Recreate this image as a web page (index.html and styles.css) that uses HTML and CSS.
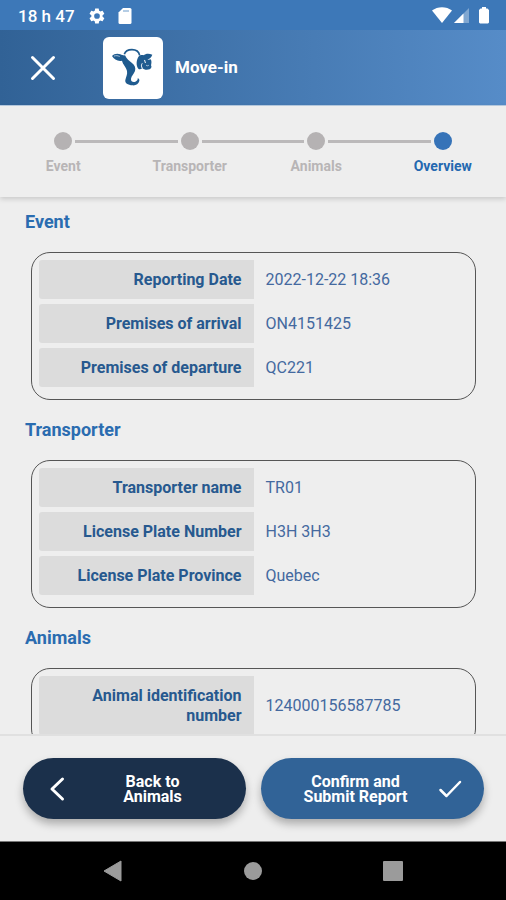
FILE: index.html
```html
<!DOCTYPE html>
<html lang="en">
<head>
<meta charset="utf-8">
<meta name="viewport" content="width=device-width, initial-scale=1">
<title>Move-in</title>
<link rel="stylesheet" href="styles.css">
</head>
<body>
<div class="status">
  <span class="time">18 h 47</span>
  <svg class="gear" width="18" height="18" viewBox="0 0 24 24" fill="currentColor"><path fill-rule="evenodd" d="M19.400 13a7.500 7.500 0 0 0 0-2l2.100-1.600c.2-.2.300-.4.100-.7l-2-3.400c-.1-.2-.4-.3-.6-.2l-2.500 1a7.300 7.300 0 0 0-1.700-1l-.4-2.600c0-.3-.2-.5-.5-.5h-4c-.2 0-.4.2-.5.5L9 5.100a7.300 7.300 0 0 0-1.700 1l-2.500-1c-.2-.1-.5 0-.6.200l-2 3.400c-.1.200 0 .5.100.7L4.500 11a7.500 7.500 0 0 0 0 2l-2.200 1.600c-.1.200-.2.500-.1.700l2 3.400c.1.200.4.300.6.200l2.500-1c.5.400 1.100.8 1.700 1l.4 2.600c.1.300.3.500.5.500h4c.3 0 .5-.2.500-.5l.4-2.600c.6-.2 1.200-.6 1.700-1l2.500 1c.2.100.5 0 .6-.2l2-3.400c.2-.2.100-.5-.1-.7zM12 15.800a3.800 3.800 0 1 1 0-7.600 3.800 3.800 0 0 1 0 7.600z"/></svg>
  <svg class="sd" width="14" height="16" viewBox="0 0 14 16" fill="currentColor"><path fill-rule="evenodd" d="M5 0H12a1.500 1.500 0 0 1 1.500 1.500v13A1.500 1.500 0 0 1 12 16H2a1.500 1.500 0 0 1-1.500-1.500V4.500z"/><path d="M5 3h6" stroke="#9dbcdc" stroke-width="1.500"/></svg>
  <span class="signals">
    <svg width="20" height="17" viewBox="0 0 20 17" fill="currentColor"><path d="M0 3.500C5.500-1 14.500-1 20 3.500L10 16z"/></svg>
    <svg width="16" height="17" viewBox="0 0 16 17" fill="currentColor"><path opacity=".35" d="M15 1v15H0z"/><path d="M9.500 6.500V16H0z"/></svg>
    <svg class="battery" width="12" height="17" viewBox="0 0 12 17" fill="currentColor"><path d="M4 0h4v1.500h1.500L11 3v12.500l-1 1H2l-1-1V3l1.500-1.500H4z"/></svg>
  </span>
</div>

<header class="bar">
  <button class="close" type="button" aria-label="Close">
    <svg width="26" height="26" viewBox="0 0 26 26" fill="none" stroke="currentColor" stroke-width="3" stroke-linecap="round"><path d="M2.500 2.500l21 21M23.500 2.500l-21 21"/></svg>
  </button>
  <svg class="logo" width="60" height="62" viewBox="0 0 180 186">
    <rect width="180" height="186" rx="18" fill="#fff"/>
    <path d="M64 52C67 42 76 38 87 38s20 4 23 17" fill="none" stroke="#1f5b8f" stroke-width="5"/>
    <g fill="#1f5b8f">
      <path d="M27 57c6-7 17-9 25-5 5 2 10 4 14 3 5 12 13 16 20 22 9 7 13 15 10 25-3 9-11 15-12 23-1 8 6 12 13 9 5-2 8-6 7-10 4 1 6 4 5 8-2 9-11 14-20 13-15-1-24-7-22-16 2-10 7-16 5-27-2-12-12-18-15-31-11 3-24-3-30-14z"/>
      <path d="M108 57c4-4 11-4 15-2 4-5 14-6 25-2-3 9-10 14-15 14 4 2 7 1 10 0 4 6 2 13 1 18 3 4 1 10-4 12-9 3-18 1-22-4-4 4-9 5-12 2-7-9-7-26 2-38z"/>
    </g>
    <g fill="none" stroke="#fff" stroke-linecap="round">
      <path d="M34 57c6-2 10-1 15 1" stroke="#a9c2d9" stroke-width="3"/>
      <path d="M117 80c-3 5-2 8 0 12M125 70l2 7" stroke-width="3"/>
      <path d="M130 85c3 2 5 2 7 0" stroke="#a9c2d9" stroke-width="3"/>
    </g>
  </svg>
  <h1>Move-in</h1>
</header>

<ol class="steps">
  <li><span class="track"><i class="dot"></i></span>Event</li>
  <li><span class="track"><i class="dot"></i></span>Transporter</li>
  <li><span class="track"><i class="dot"></i></span>Animals</li>
  <li class="current" aria-current="step"><span class="track"><i class="dot"></i></span>Overview</li>
</ol>

<main>
  <section>
    <h2>Event</h2>
    <div class="card">
      <table>
        <tr><th scope="row">Reporting Date</th><td>2022-12-22 18:36</td></tr>
        <tr><th scope="row">Premises of arrival</th><td>ON4151425</td></tr>
        <tr><th scope="row">Premises of departure</th><td>QC221</td></tr>
      </table>
    </div>
  </section>
  <section>
    <h2>Transporter</h2>
    <div class="card">
      <table>
        <tr><th scope="row">Transporter name</th><td>TR01</td></tr>
        <tr><th scope="row">License Plate Number</th><td>H3H 3H3</td></tr>
        <tr><th scope="row">License Plate Province</th><td>Quebec</td></tr>
      </table>
    </div>
  </section>
  <section>
    <h2>Animals</h2>
    <div class="card">
      <table>
        <tr><th scope="row">Animal identification number</th><td>124000156587785</td></tr>
      </table>
    </div>
  </section>
</main>

<footer class="actions">
  <button class="action back" type="button">
    <svg width="16" height="26" viewBox="0 0 16 26" fill="none" stroke="currentColor" stroke-width="3" stroke-linecap="round" stroke-linejoin="round"><path d="M13.500 3L3 13l10.500 10"/></svg>
    <span>Back to<br>Animals</span>
  </button>
  <button class="action confirm" type="button">
    <span>Confirm and<br>Submit Report</span>
    <svg width="24" height="20" viewBox="0 0 24 20" fill="none" stroke="currentColor" stroke-width="2.500" stroke-linecap="round" stroke-linejoin="round"><path d="M2.500 11l6 6L22 3"/></svg>
  </button>
</footer>

<nav class="system">
  <button type="button" aria-label="Back"><svg width="20" height="22" viewBox="0 0 20 22" fill="currentColor"><path d="M18 1v20L1 11z" stroke="currentColor" stroke-linejoin="round"/></svg></button>
  <button type="button" aria-label="Home"><svg width="20" height="20" viewBox="0 0 20 20" fill="currentColor"><circle cx="10" cy="10" r="9"/></svg></button>
  <button type="button" aria-label="Recent apps"><svg width="20" height="20" viewBox="0 0 20 20" fill="currentColor"><rect width="20" height="20" rx="1"/></svg></button>
</nav>
</body>
</html>
```
FILE: styles.css
```css
* {
  box-sizing: border-box;
}

body {
  margin: 0;
  height: 100vh;
  display: flex;
  flex-direction: column;
  background: #eee;
  font-family: Roboto, "Liberation Sans", sans-serif;
  font-size: 16px;
  line-height: 20px;
}

button {
  border: 0;
  padding: 0;
  background: none;
  color: inherit;
  font: inherit;
}

svg {
  display: block;
  flex: none;
}

.status {
  flex: none;
  height: 30px;
  padding: 1px 16px 0 18px;
  display: flex;
  align-items: center;
  background: #3d78b8;
  color: #fff;
}

.time {
  font-size: 17px;
  font-weight: 500;
}

.gear {
  margin-left: 13px;
}

.sd {
  margin-left: 12px;
}

.signals {
  margin-left: auto;
  display: flex;
  gap: 2px;
}

.battery {
  margin-left: 6px;
}

.bar {
  flex: none;
  height: 76px;
  padding: 0 30px;
  display: flex;
  align-items: center;
  background: linear-gradient(to right, #316296, #568cc8);
  border-bottom: 1px solid #b9cde3;
  color: #fff;
}

.logo {
  margin: 0 12px 0 47px;
}

h1 {
  margin: 0;
  padding-bottom: 2px;
  font-size: 17px;
  font-weight: 700;
}

.steps {
  position: relative;
  z-index: 1;
  flex: none;
  margin: 0;
  padding: 26px 0 21px;
  list-style: none;
  display: grid;
  grid-template-columns: repeat(4, 1fr);
  background: #eee;
  box-shadow: 0 2px 5px rgba(0, 0, 0, 0.16);
  color: #b8b5b6;
  font-size: 14px;
  font-weight: 700;
  text-align: center;
}

.track {
  display: flex;
  align-items: center;
  gap: 3px;
  margin-bottom: 6px;
}

.track::before,
.track::after {
  content: "";
  flex: 1;
  height: 3px;
  background: #bbb9ba;
}

.steps li:first-child .track::before,
.steps li:last-child .track::after {
  background: none;
}

.dot {
  width: 18px;
  height: 18px;
  border-radius: 50%;
  background: #b5b2b3;
}

.current {
  color: #2468b0;
}

.current .dot {
  background: #3673b8;
}

main {
  flex: 1;
  min-height: 0;
  overflow-y: auto;
  scrollbar-width: none;
  padding: 13px 30px 0 25px;
}

section {
  margin-bottom: 18px;
}

h2 {
  margin: 0 0 18px;
  color: #2a6cb0;
  font-size: 18px;
  font-weight: 700;
  line-height: 24px;
}

.card {
  margin-left: 6px;
  padding: 2px 7px 7px;
  border: 1px solid #555;
  border-radius: 19px;
}

table {
  width: 100%;
  table-layout: fixed;
  border-spacing: 0 5px;
}

th,
td {
  padding: 10px 12px 9px;
}

th {
  border-radius: 3px 0 0 3px;
  background: #dcdcdc;
  color: #27598f;
  font-weight: 700;
  text-align: right;
}

td {
  color: #44699f;
}

.actions {
  flex: none;
  padding: 22px 22px 22px 23px;
  display: grid;
  grid-template-columns: 1fr 1fr;
  gap: 15px;
  background: #eee;
  border-top: 2px solid #e0e0e0;
}

.action {
  height: 61px;
  padding: 0 22px 0 26px;
  display: flex;
  align-items: center;
  border-radius: 31px;
  box-shadow: 0 5px 8px rgba(0, 0, 0, 0.28);
  color: #fff;
  font-weight: 700;
  line-height: 15px;
}

.action span {
  flex: 1;
}

.back {
  background: #1b304b;
}

.back span {
  padding-left: 16px;
}

.confirm {
  background: #316397;
}

.confirm span {
  padding-right: 14px;
}

.system {
  flex: none;
  height: 59px;
  padding: 0 43px;
  display: grid;
  grid-template-columns: repeat(3, 1fr);
  background: #000;
  border-top: 1px solid #777;
  color: #9b9b9b;
}

.system button {
  display: grid;
  place-items: center;
}
```
